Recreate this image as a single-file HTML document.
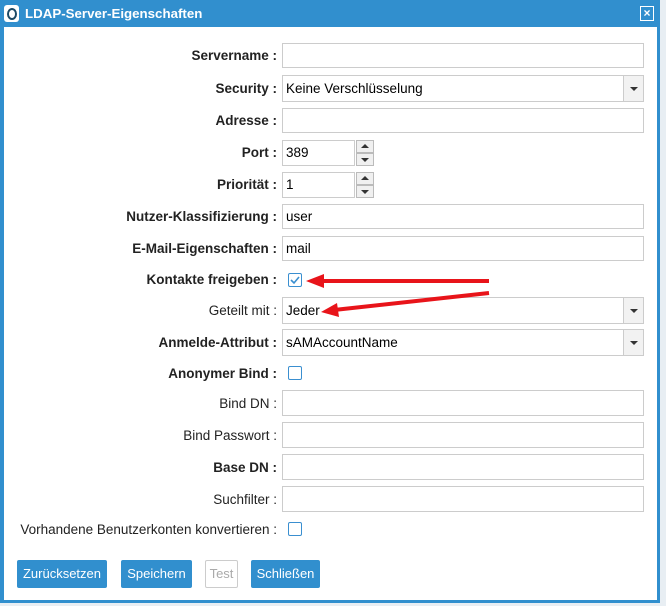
<!DOCTYPE html>
<html><head><meta charset="utf-8"><style>
body{margin:0;width:666px;height:606px;background:#e8eef3;position:relative;overflow:hidden;font-family:"Liberation Sans",Arial,sans-serif;}
.dlg{position:absolute;left:0;top:0;width:660px;height:603px;background:#318fce;}
.hdr{position:absolute;left:0;top:0;width:660px;height:27px;color:#fff;font-weight:bold;font-size:13.3px;}
.body{position:absolute;left:4px;top:27px;width:653px;height:573px;background:#fff;}
.lbl{position:absolute;right:389px;font-size:13.5px;color:#222;text-align:right;white-space:nowrap;}
.b{font-weight:bold;}
.inp{position:absolute;left:282px;width:362px;height:25px;border:1px solid #ccc;box-sizing:border-box;font-size:13.5px;line-height:23px;padding-left:3px;color:#000;background:#fff;}
.sel .dd{position:absolute;right:0;top:0;width:19px;height:23px;border-left:1px solid #ccc;background:#f2f2f2;}
.sel .dd:after{content:"";position:absolute;left:6px;top:11px;border:4px solid transparent;border-top:4px solid #333;border-bottom:0;}
.spin{position:absolute;left:356px;width:19px;height:26px;}
.spin div{position:absolute;left:0;width:18px;height:13px;border:1px solid #bbb;background:#f0f0f0;box-sizing:border-box;}
.spin .u:after{content:"";position:absolute;left:4px;top:3px;border:4px solid transparent;border-bottom:4px solid #333;border-top:0;}
.spin .d:after{content:"";position:absolute;left:4px;top:4px;border:4px solid transparent;border-top:4px solid #333;border-bottom:0;}
.cb{position:absolute;left:288px;width:14px;height:14px;border:1px solid #3a8fd0;border-radius:2px;box-sizing:border-box;}
.btn{position:absolute;top:560px;height:28px;background:#318fce;color:#fff;font-size:13px;line-height:28px;text-align:center;border-radius:2px;}
</style></head><body>
<div class="dlg">
<div class="hdr">
<div style="position:absolute;left:4px;top:5px;width:15px;height:17px;background:#fff;border-radius:3px;"><div style="position:absolute;left:3px;top:3px;width:6px;height:8px;border:2px solid #1d4a66;border-radius:50%;"></div></div>
<span style="position:absolute;left:25px;top:6px;">LDAP-Server-Eigenschaften</span>
<div style="position:absolute;left:640px;top:6px;width:14px;height:15px;border:1px solid #fff;box-sizing:border-box;font-size:12px;line-height:12px;text-align:center;">×</div>
</div>
<div class="body"></div>
</div>
<div style="position:absolute;left:0;top:0;width:666px;height:606px;">
<div class="lbl b" style="top:48px">Servername :</div><div class="inp" style="top:43px"></div>
<div class="lbl b" style="top:81px">Security :</div><div class="inp sel" style="top:75px;height:27px;line-height:25px">Keine Verschlüsselung<div class="dd" style="height:25px"></div></div>
<div class="lbl b" style="top:113px">Adresse :</div><div class="inp" style="top:108px"></div>
<div class="lbl b" style="top:145px">Port :</div><div class="inp" style="top:140px;width:73px;height:26px">389</div>
<div class="spin" style="top:140px"><div class="u" style="top:0"></div><div class="d" style="top:13px"></div></div>
<div class="lbl b" style="top:177px">Priorität :</div><div class="inp" style="top:172px;width:73px;height:26px">1</div>
<div class="spin" style="top:172px"><div class="u" style="top:0"></div><div class="d" style="top:13px"></div></div>
<div class="lbl b" style="top:209px">Nutzer-Klassifizierung :</div><div class="inp" style="top:204px">user</div>
<div class="lbl b" style="top:241px">E-Mail-Eigenschaften :</div><div class="inp" style="top:236px">mail</div>
<div class="lbl b" style="top:272px">Kontakte freigeben :</div>
<div class="cb" style="top:273px"><svg width="12" height="12" style="position:absolute;left:0;top:0"><path d="M2 6l3 3 5-6" stroke="#3a8fd0" stroke-width="1.6" fill="none"/></svg></div>
<div class="lbl" style="top:303px">Geteilt mit :</div><div class="inp sel" style="top:297px;height:27px;line-height:25px">Jeder<div class="dd" style="height:25px"></div></div>
<div class="lbl b" style="top:335px">Anmelde-Attribut :</div><div class="inp sel" style="top:329px;height:27px;line-height:25px">sAMAccountName<div class="dd" style="height:25px"></div></div>
<div class="lbl b" style="top:366px">Anonymer Bind :</div><div class="cb" style="top:366px"></div>
<div class="lbl" style="top:396px">Bind DN :</div><div class="inp" style="top:390px;height:26px"></div>
<div class="lbl" style="top:428px">Bind Passwort :</div><div class="inp" style="top:422px;height:26px"></div>
<div class="lbl b" style="top:460px">Base DN :</div><div class="inp" style="top:454px;height:26px"></div>
<div class="lbl" style="top:492px">Suchfilter :</div><div class="inp" style="top:486px;height:26px"></div>
<div class="lbl" style="top:522px">Vorhandene Benutzerkonten konvertieren :</div><div class="cb" style="top:522px"></div>
<div class="btn" style="left:17px;width:90px">Zurücksetzen</div>
<div class="btn" style="left:121px;width:71px">Speichern</div>
<div class="btn" style="left:205px;width:33px;background:#fff;color:#aaa;border:1px solid #ccc;box-sizing:border-box;line-height:26px">Test</div>
<div class="btn" style="left:251px;width:69px">Schließen</div>
<svg width="666" height="606" style="position:absolute;left:0;top:0">
<path d="M489 281H320" stroke="#e8141a" stroke-width="4"/>
<path d="M306 281l18-7v14z" fill="#e8141a"/>
<path d="M489 293L334 310" stroke="#e8141a" stroke-width="4"/>
<path d="M321 312l16-9 2 14z" fill="#e8141a"/>
</svg>
</div>
</body></html>
